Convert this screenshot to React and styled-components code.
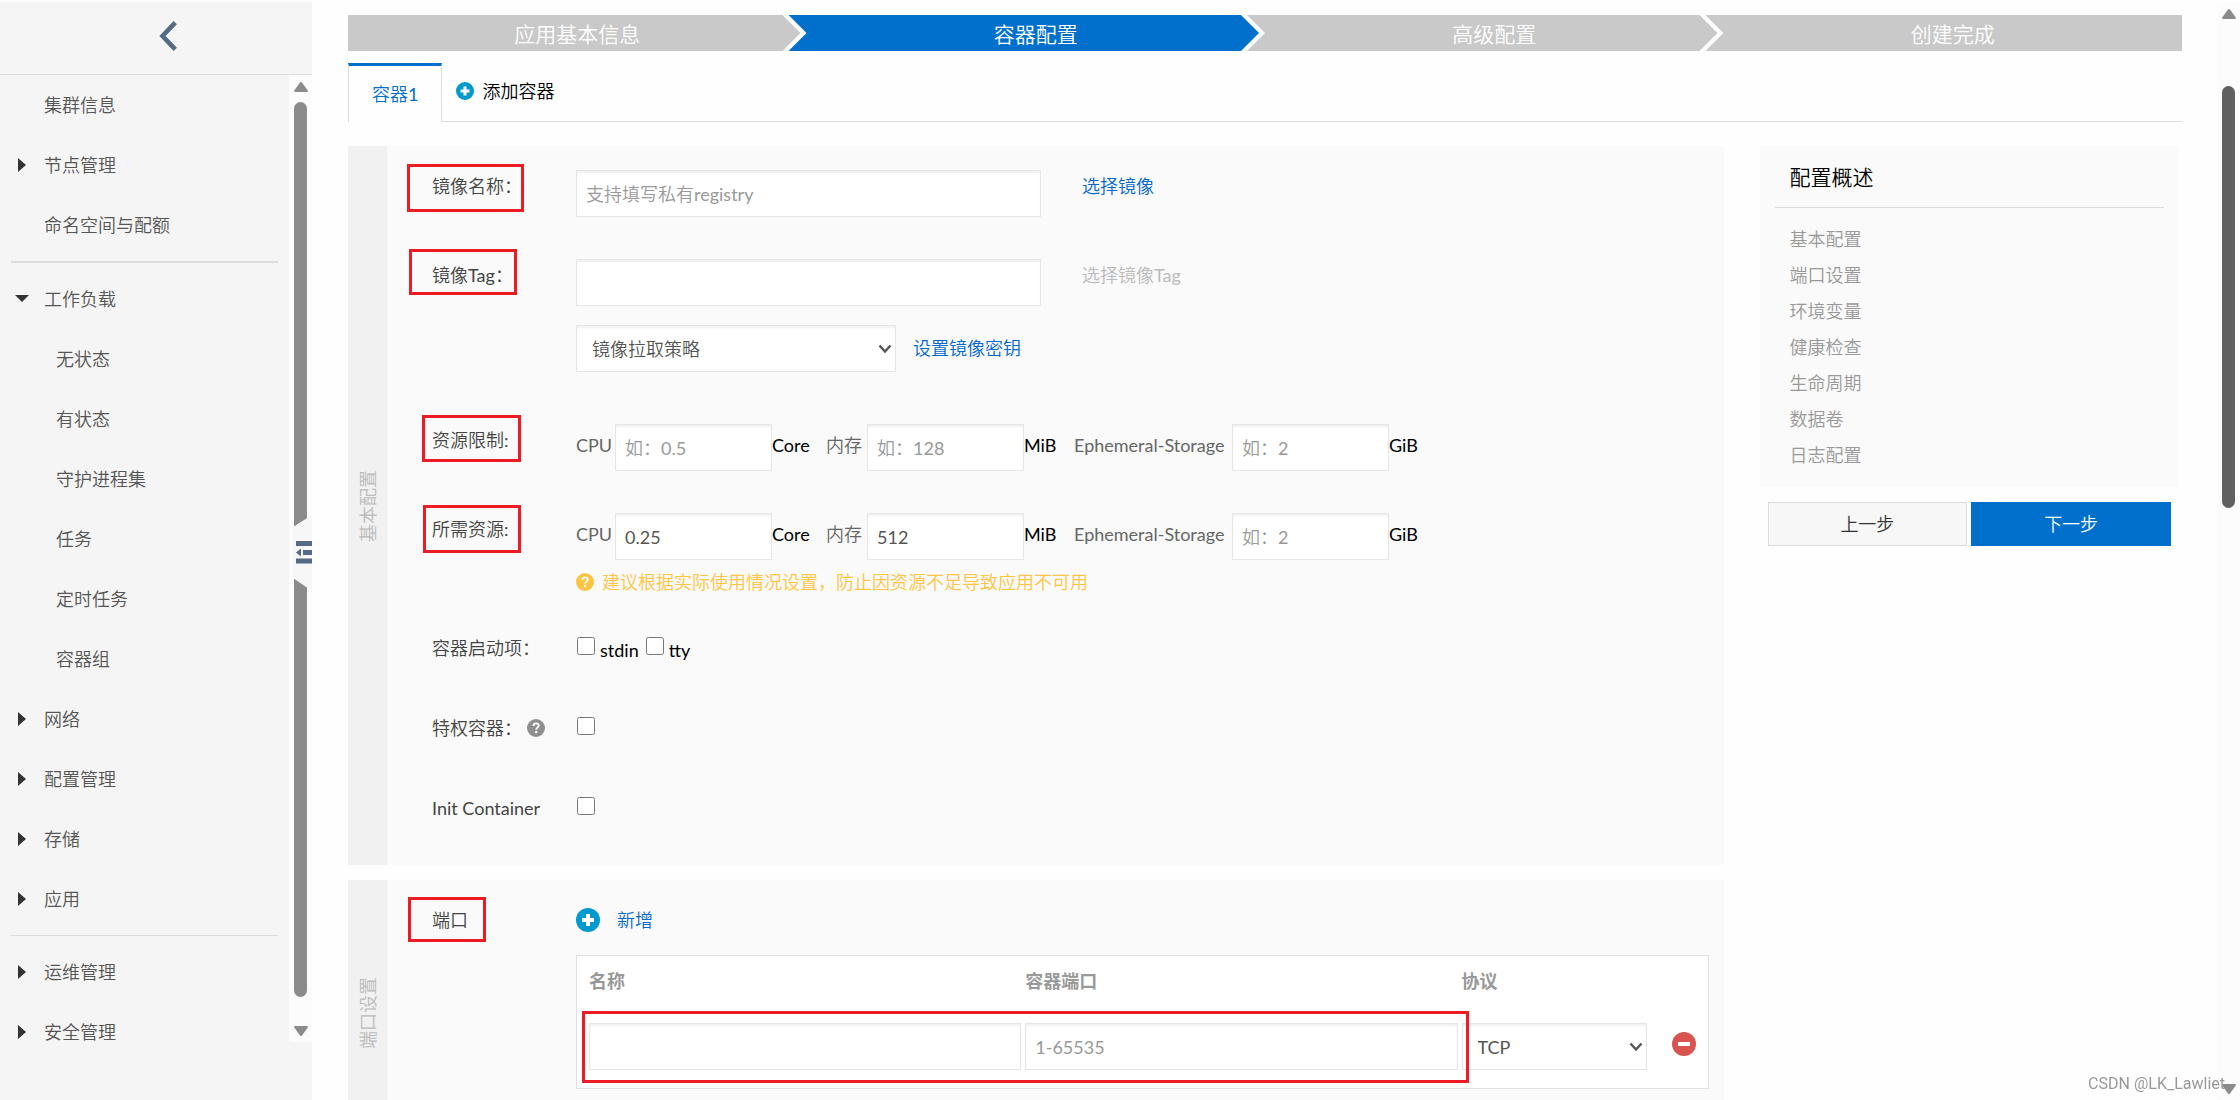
import React, { useState } from "react";
import styled, { createGlobalStyle } from "styled-components";

const GlobalStyle = createGlobalStyle`
  * {
    box-sizing: border-box;
  }
  body {
    margin: 0;
    background: #fefefe;
    overflow: hidden;
  }
  body, button, input, select {
    font-family: Lato, "Noto Sans CJK SC DemiLight", "Noto Sans CJK SC", sans-serif;
    font-size: 18px;
    font-weight: 400;
    line-height: 24px;
  }
`;

const Page = styled.div`
  display: flex;
  height: 100vh;
  padding-top: 2px;
  overflow: hidden;
  color: #444;
`;

/* ---------- scroll rail ---------- */

const Rail = styled.div`
  display: flex;
  flex-direction: column;
  align-items: center;
  flex: 0 0 23px;
  padding: 7px 0 6px;
  background: #fcfcfc;
`;

const Space = styled.div`
  flex: ${(props) => props.$grow} 0 10px;
`;

const Thumb = styled.div`
  width: 13px;
  flex: ${(props) => props.$grow} 0 0;
  border-radius: 7px;
  background: ${(props) => (props.$dark ? "#606060" : "#8b8b8b")};
`;

const Arrow = styled.svg`
  display: block;
  width: 14px;
  height: 10px;
  fill: #8b8b8b;
`;

/* ---------- sidebar ---------- */

const Sidebar = styled.aside`
  position: relative;
  display: flex;
  flex-direction: column;
  flex: 0 0 312px;
  padding-bottom: 58px;
  background: #f5f5f5;
`;

const SidebarHead = styled.div`
  display: flex;
  align-items: center;
  justify-content: center;
  flex: 0 0 73px;
  padding-left: 24px;
  border-bottom: 1px solid #dcdcdc;
`;

const BackBtn = styled.button`
  display: block;
  padding: 0;
  border: 0;
  background: none;
  cursor: pointer;
`;

const SidebarBody = styled.div`
  display: flex;
  flex: 1;
  min-height: 0;
`;

const Menu = styled.nav`
  flex: 1;
`;

const MenuItem = styled.a`
  display: flex;
  align-items: center;
  height: 60px;
  padding-left: ${(props) => (props.$child ? 56 : 14)}px;
  color: #555;
  text-decoration: none;
`;

const Caret = styled.svg`
  flex: 0 0 16px;
  height: 16px;
  margin-right: 14px;
  fill: #333;
`;

const Divider = styled.hr`
  height: ${(props) => props.$size}px;
  margin: 6px 11px;
  border: 0;
  background: #dcdcdc;
`;

const FoldBtn = styled.button`
  position: absolute;
  top: 513px;
  right: 0;
  padding: 0;
  border: 0;
  background: none;
  cursor: pointer;
  & svg {
    display: block;
  }
`;

/* ---------- main ---------- */

const Main = styled.main`
  flex: 1;
  min-width: 0;
  padding: 13px 35px 0 36px;
`;

const Steps = styled.ol`
  display: grid;
  grid-template-columns: repeat(4, 1fr);
  margin: 0;
  padding: 0;
  list-style: none;
`;

const Step = styled.li`
  height: 36px;
  margin: 0 6px 0 -18px;
  padding-left: 24px;
  line-height: 37px;
  font-size: 21px;
  text-align: center;
  color: #fff;
  background: ${(props) => (props.$active ? "#0070cc" : "#c9c9c9")};
  clip-path: polygon(
    0 0,
    calc(100% - 18px) 0,
    100% 50%,
    calc(100% - 18px) 100%,
    0 100%,
    18px 50%
  );
  &:first-child {
    margin-left: 0;
    padding-left: 6px;
    clip-path: polygon(
      0 0,
      calc(100% - 18px) 0,
      100% 50%,
      calc(100% - 18px) 100%,
      0 100%
    );
  }
  &:last-child {
    margin-right: 0;
    padding-left: 18px;
    clip-path: polygon(0 0, 100% 0, 100% 100%, 0 100%, 18px 50%);
  }
`;

const Tabs = styled.div`
  display: flex;
  height: 59px;
  margin: 12px 0 24px;
  box-shadow: inset 0 -1px 0 #dcdcdc;
`;

const Tab = styled.button`
  padding: 0 23px;
  border: 1px solid #dcdcdc;
  border-top: 3px solid #0070cc;
  border-bottom: 0;
  background: #fefefe;
  color: #0070cc;
  cursor: pointer;
`;

const AddTab = styled.button`
  display: flex;
  align-items: center;
  gap: 8px;
  padding: 0 14px 4px;
  border: 0;
  background: none;
  color: #000;
  cursor: pointer;
`;

const Columns = styled.div`
  display: grid;
  grid-template-columns: 3fr 1fr;
`;

const Panel = styled.section`
  display: flex;
  margin-bottom: 15px;
  background: #fafafa;
`;

const PanelName = styled.h2`
  display: flex;
  align-items: center;
  justify-content: center;
  flex: 0 0 39px;
  margin: 0;
  font-size: 18px;
  font-weight: 400;
  color: #bbb;
  background: #f1f1f1;
  & span {
    writing-mode: vertical-rl;
    text-orientation: sideways;
    transform: rotate(180deg);
  }
`;

const PanelBody = styled.div`
  flex: 1;
  min-width: 0;
  padding: ${(props) => props.$pad};
`;

const Row = styled.div`
  display: grid;
  grid-template-columns: 144px 1fr;
  align-items: start;
  min-height: 38px;
  &:not(:first-child) {
    margin-top: ${(props) => props.$space || 42}px;
  }
`;

const Name = styled.div`
  position: relative;
  display: flex;
  align-items: center;
  gap: 5px;
  padding-top: 4px;
`;

const Mark = styled.i`
  position: absolute;
  top: ${(props) => props.$top}px;
  left: ${(props) => props.$left}px;
  width: ${(props) => props.$width}px;
  height: ${(props) => props.$height}px;
  border: 3px solid #ed1c24;
  pointer-events: none;
`;

const Line = styled.div`
  display: flex;
  align-items: flex-start;
  & + & {
    margin-top: 19px;
  }
`;

const Input = styled.input`
  display: block;
  width: ${(props) => props.$width || "100%"};
  height: 47px;
  padding: 0 9px;
  border: 1px solid #e6e6e6;
  border-radius: 0;
  outline: 0;
  color: #555;
  background: #fff;
  box-shadow: inset 0 2px 2px rgba(0, 0, 0, 0.06);
  &::placeholder {
    color: #999;
    opacity: 1;
  }
`;

const SelectBox = styled.div`
  position: relative;
  width: ${(props) => props.$width || "100%"};
  & svg {
    position: absolute;
    top: 19px;
    right: 4px;
    pointer-events: none;
  }
`;

const Select = styled.select`
  display: block;
  width: 100%;
  height: 47px;
  padding: 0 15px;
  appearance: none;
  border: 1px solid #e6e6e6;
  border-radius: 0;
  color: #555;
  background: #fff;
  box-shadow: inset 0 2px 2px rgba(0, 0, 0, 0.06);
`;

const TextLink = styled.a`
  padding-top: ${(props) => (props.$low ? 11 : 4)}px;
  margin-left: ${(props) => props.$space}px;
  color: ${(props) => (props.$muted ? "#bbb" : "#0068cf")};
  text-decoration: none;
`;

const Resources = styled.div`
  display: grid;
  grid-template-columns: 39px 157px 54px 41px 157px 50px 158px 157px auto;
  justify-content: start;
  line-height: 43px;
  white-space: nowrap;
  color: #666;
`;

const Unit = styled.span`
  color: #000;
`;

const Hint = styled.p`
  display: flex;
  align-items: center;
  gap: 8px;
  margin: 10px 0 0;
  color: #ffc440;
`;

const Checks = styled.div`
  display: flex;
  gap: 6px;
  padding-top: 5px;
`;

const Check = styled.label`
  display: flex;
  gap: 5px;
  color: #000;
  & span {
    padding-top: 1px;
  }
`;

const CheckInput = styled.input.attrs({ type: "checkbox" })`
  width: 18px;
  height: 18px;
  margin: 0 0 0 1px;
`;

const AddPort = styled.button`
  display: flex;
  align-items: center;
  gap: 17px;
  height: 24px;
  padding: 0;
  border: 0;
  background: none;
  color: #0068cf;
  cursor: pointer;
`;

const PortBox = styled.div`
  position: relative;
  margin-top: 23px;
  padding: 0 0 18px 12px;
  border: 1px solid #dde1e5;
  background: #fff;
`;

const PortMark = styled.i`
  position: absolute;
  top: 55px;
  left: 5px;
  right: 239px;
  height: 72px;
  border: 3px solid #ed1c24;
  pointer-events: none;
`;

const PortTable = styled.table`
  width: 100%;
  table-layout: fixed;
  border-collapse: collapse;
  & th {
    padding: 13px 0 30px;
    text-align: left;
    font-family: Lato, "Noto Sans CJK SC", sans-serif;
    font-weight: 700;
    color: #999;
  }
  & td {
    padding: 0 4px 0 0;
  }
  & th:nth-child(3) {
    width: 189px;
  }
  & th:nth-child(4) {
    width: 57px;
  }
`;

const RemoveBtn = styled.button`
  display: block;
  margin-left: 21px;
  padding: 0;
  border: 0;
  background: none;
  cursor: pointer;
`;

/* ---------- summary ---------- */

const Aside = styled.div`
  padding: 0 3px 0 36px;
`;

const Summary = styled.div`
  padding: 0 15px 14px;
  background: #fafafa;
`;

const SummaryTitle = styled.h3`
  margin: 0 0 13px;
  padding: 15px 15px 14px;
  border-bottom: 1px solid #dcdcdc;
  font-size: 21px;
  font-weight: 400;
  line-height: 32px;
  color: #000;
`;

const SummaryLink = styled.a`
  display: block;
  padding-left: 15px;
  line-height: 36px;
  color: #999;
  text-decoration: none;
`;

const Actions = styled.div`
  display: grid;
  grid-template-columns: 1fr 1fr;
  gap: 4px;
  padding: 15px 8px 0;
`;

const ActionBtn = styled.button`
  height: 44px;
  border: 1px solid ${(props) => (props.$primary ? "#0070cc" : "#dcdcdc")};
  background: ${(props) => (props.$primary ? "#0070cc" : "#f7f7f7")};
  color: ${(props) => (props.$primary ? "#fff" : "#333")};
  cursor: pointer;
`;

const Watermark = styled.div`
  position: fixed;
  right: 15px;
  bottom: 4px;
  font-family: Roboto, sans-serif;
  font-size: 16px;
  color: #999;
`;

const menu = [
  { text: "集群信息" },
  { text: "节点管理", caret: "right" },
  { text: "命名空间与配额" },
  { divider: 2 },
  { text: "工作负载", caret: "down" },
  { text: "无状态", child: true },
  { text: "有状态", child: true },
  { text: "守护进程集", child: true },
  { text: "任务", child: true },
  { text: "定时任务", child: true },
  { text: "容器组", child: true },
  { text: "网络", caret: "right" },
  { text: "配置管理", caret: "right" },
  { text: "存储", caret: "right" },
  { text: "应用", caret: "right" },
  { divider: 1 },
  { text: "运维管理", caret: "right" },
  { text: "安全管理", caret: "right" },
];

const steps = ["应用基本信息", "容器配置", "高级配置", "创建完成"];

const summary = [
  "基本配置",
  "端口设置",
  "环境变量",
  "健康检查",
  "生命周期",
  "数据卷",
  "日志配置",
];

const carets = {
  right: "M4 1 L12 8 L4 15 Z",
  down: "M1 4 L15 4 L8 11 Z",
};

function ScrollRail({ before, size, after, dark }) {
  return (
    <Rail>
      <Arrow viewBox="0 0 14 10">
        <path d="M6 .6a1.3 1.3 0 0 1 2 0l5.6 7.6c.6.9.2 1.8-.9 1.8H1.3C.2 10-.2 9.1.4 8.2Z" />
      </Arrow>
      <Space $grow={before} />
      <Thumb $grow={size} $dark={dark} />
      <Space $grow={after} />
      <Arrow viewBox="0 0 14 10">
        <path d="M6 9.4a1.3 1.3 0 0 0 2 0l5.6-7.6C14.2.9 13.8 0 12.7 0H1.3C.2 0-.2.9.4 1.8Z" />
      </Arrow>
    </Rail>
  );
}

function CircleIcon({ size, color, kind }) {
  return (
    <svg width={size} height={size} viewBox="0 0 24 24" fill="none">
      <circle cx="12" cy="12" r="12" fill={color} />
      {kind === "plus" && (
        <path d="M12 6v12M6 12h12" stroke="#fff" strokeWidth="4" />
      )}
      {kind === "minus" && <path d="M6 12h12" stroke="#fff" strokeWidth="4" />}
      {kind === "help" && (
        <>
          <path
            d="M8.5 9.3c0-2.2 1.5-3.5 3.6-3.5 2 0 3.5 1.2 3.5 3 0 2.6-3.3 2.7-3.3 5.200"
            stroke="#fff"
            strokeWidth="2.4"
          />
          <circle cx="12.2" cy="17.4" r="1.6" fill="#fff" />
        </>
      )}
    </svg>
  );
}

function Chevron() {
  return (
    <svg width="14" height="10" viewBox="0 0 14 10" fill="none">
      <path d="M1.5 1.5 L7 7.5 L12.5 1.5" stroke="#555" strokeWidth="2.4" />
    </svg>
  );
}

function ResourceFields({ id, cpu, memory }) {
  return (
    <Resources>
      <label htmlFor={id + "-cpu"}>CPU</label>
      <Input id={id + "-cpu"} placeholder="如：0.5" defaultValue={cpu} />
      <Unit>Core</Unit>
      <label htmlFor={id + "-memory"}>内存</label>
      <Input id={id + "-memory"} placeholder="如：128" defaultValue={memory} />
      <Unit>MiB</Unit>
      <label htmlFor={id + "-storage"}>Ephemeral-Storage</label>
      <Input id={id + "-storage"} placeholder="如：2" />
      <Unit>GiB</Unit>
    </Resources>
  );
}

function SideMenu() {
  return (
    <Sidebar>
      <SidebarHead>
        <BackBtn aria-label="返回">
          <svg width="18" height="30" viewBox="0 0 18 30" fill="none">
            <path d="M16.3 1.7 L3.5 15 L16.3 28.3" stroke="#546a87" strokeWidth="4.6" />
          </svg>
        </BackBtn>
      </SidebarHead>
      <SidebarBody>
        <Menu>
          {menu.map((item, i) =>
            item.divider ? (
              <Divider key={i} $size={item.divider} />
            ) : (
              <MenuItem key={i} href="#" $child={item.child}>
                {!item.child && (
                  <Caret viewBox="0 0 16 16">
                    {item.caret && <path d={carets[item.caret]} />}
                  </Caret>
                )}
                {item.text}
              </MenuItem>
            )
          )}
        </Menu>
        <ScrollRail before={0} size={894} after={19} />
      </SidebarBody>
      <FoldBtn aria-label="收起">
        <svg width="19" height="76" viewBox="0 0 19 76">
          <path d="M19 0 L0 12 V63 L19 76 Z" fill="#f7f7f7" />
          <path d="M3 26h16v5H3zM10 35h9v5h-9zM3 43.5h16v5H3zM3 37.5l5-4v8z" fill="#546a87" />
        </svg>
      </FoldBtn>
    </Sidebar>
  );
}

function App() {
  const [policy, setPolicy] = useState("");

  return (
    <>
      <GlobalStyle />
      <Page>
        <SideMenu />
        <Main>
          <Steps>
            {steps.map((step, i) => (
              <Step key={step} $active={i === 1}>
                {step}
              </Step>
            ))}
          </Steps>
          <Tabs>
            <Tab>容器1</Tab>
            <AddTab>
              <CircleIcon size={18} color="#0099cc" kind="plus" />
              添加容器
            </AddTab>
          </Tabs>
          <Columns>
            <div>
              <Panel>
                <PanelName>
                  <span>基本配置</span>
                </PanelName>
                <PanelBody $pad="24px 15px 35px 45px">
                  <Row>
                    <Name>
                      <label htmlFor="image">镜像名称：</label>
                      <Mark $top={-6} $left={-25} $width={117} $height={48} />
                    </Name>
                    <Line>
                      <Input id="image" $width="465px" placeholder="支持填写私有registry" />
                      <TextLink href="#" $space={41}>选择镜像</TextLink>
                    </Line>
                  </Row>
                  <Row>
                    <Name>
                      <label htmlFor="tag">镜像Tag：</label>
                      <Mark $top={-10} $left={-23} $width={108} $height={46} />
                    </Name>
                    <div>
                      <Line>
                        <Input id="tag" $width="465px" />
                        <TextLink href="#" $space={41} $muted>选择镜像Tag</TextLink>
                      </Line>
                      <Line>
                        <SelectBox $width="320px">
                          <Select
                            aria-label="镜像拉取策略"
                            value={policy}
                            onChange={(e) => setPolicy(e.target.value)}
                          >
                            <option value="">镜像拉取策略</option>
                          </Select>
                          <Chevron />
                        </SelectBox>
                        <TextLink href="#" $space={17} $low>设置镜像密钥</TextLink>
                      </Line>
                    </div>
                  </Row>
                  <Row $space={52}>
                    <Name>
                      资源限制:
                      <Mark $top={-9} $left={-10} $width={99} $height={47} />
                    </Name>
                    <ResourceFields id="limit" />
                  </Row>
                  <Row>
                    <Name>
                      所需资源:
                      <Mark $top={-8} $left={-9} $width={98} $height={48} />
                    </Name>
                    <div>
                      <ResourceFields id="request" cpu="0.25" memory="512" />
                      <Hint>
                        <CircleIcon size={18} color="#ffc440" kind="help" />
                        建议根据实际使用情况设置，防止因资源不足导致应用不可用
                      </Hint>
                    </div>
                  </Row>
                  <Row $space={38}>
                    <Name>容器启动项：</Name>
                    <Checks>
                      <Check>
                        <CheckInput />
                        <span>stdin</span>
                      </Check>
                      <Check>
                        <CheckInput />
                        <span>tty</span>
                      </Check>
                    </Checks>
                  </Row>
                  <Row>
                    <Name>
                      <label htmlFor="privileged">特权容器：</label>
                      <CircleIcon size={18} color="#8f8f8f" kind="help" />
                    </Name>
                    <Checks>
                      <CheckInput id="privileged" />
                    </Checks>
                  </Row>
                  <Row>
                    <Name>
                      <label htmlFor="init">Init Container</label>
                    </Name>
                    <Checks>
                      <CheckInput id="init" />
                    </Checks>
                  </Row>
                </PanelBody>
              </Panel>
              <Panel>
                <PanelName>
                  <span>端口设置</span>
                </PanelName>
                <PanelBody $pad="24px 15px 57px 45px">
                  <Row>
                    <Name>
                      端口
                      <Mark $top={-7} $left={-24} $width={78} $height={45} />
                    </Name>
                    <div>
                      <Line>
                        <TextLink as="div">
                          <AddPort>
                            <CircleIcon size={24} color="#0099cc" kind="plus" />
                            新增
                          </AddPort>
                        </TextLink>
                      </Line>
                      <PortBox>
                        <PortTable>
                          <thead>
                            <tr>
                              <th>名称</th>
                              <th>容器端口</th>
                              <th>协议</th>
                              <th />
                            </tr>
                          </thead>
                          <tbody>
                            <tr>
                              <td>
                                <Input aria-label="名称" />
                              </td>
                              <td>
                                <Input aria-label="容器端口" placeholder="1-65535" />
                              </td>
                              <td>
                                <SelectBox>
                                  <Select aria-label="协议">
                                    <option>TCP</option>
                                    <option>UDP</option>
                                  </Select>
                                  <Chevron />
                                </SelectBox>
                              </td>
                              <td>
                                <RemoveBtn aria-label="删除">
                                  <CircleIcon size={24} color="#d9534f" kind="minus" />
                                </RemoveBtn>
                              </td>
                            </tr>
                          </tbody>
                        </PortTable>
                        <PortMark />
                      </PortBox>
                    </div>
                  </Row>
                </PanelBody>
              </Panel>
            </div>
            <Aside>
              <Summary>
                <SummaryTitle>配置概述</SummaryTitle>
                {summary.map((text) => (
                  <SummaryLink key={text} href="#">
                    {text}
                  </SummaryLink>
                ))}
              </Summary>
              <Actions>
                <ActionBtn>上一步</ActionBtn>
                <ActionBtn $primary>下一步</ActionBtn>
              </Actions>
            </Aside>
          </Columns>
        </Main>
        <ScrollRail before={57} size={422} after={567} dark />
      </Page>
      <Watermark>CSDN @LK_Lawliet</Watermark>
    </>
  );
}

export default App;
